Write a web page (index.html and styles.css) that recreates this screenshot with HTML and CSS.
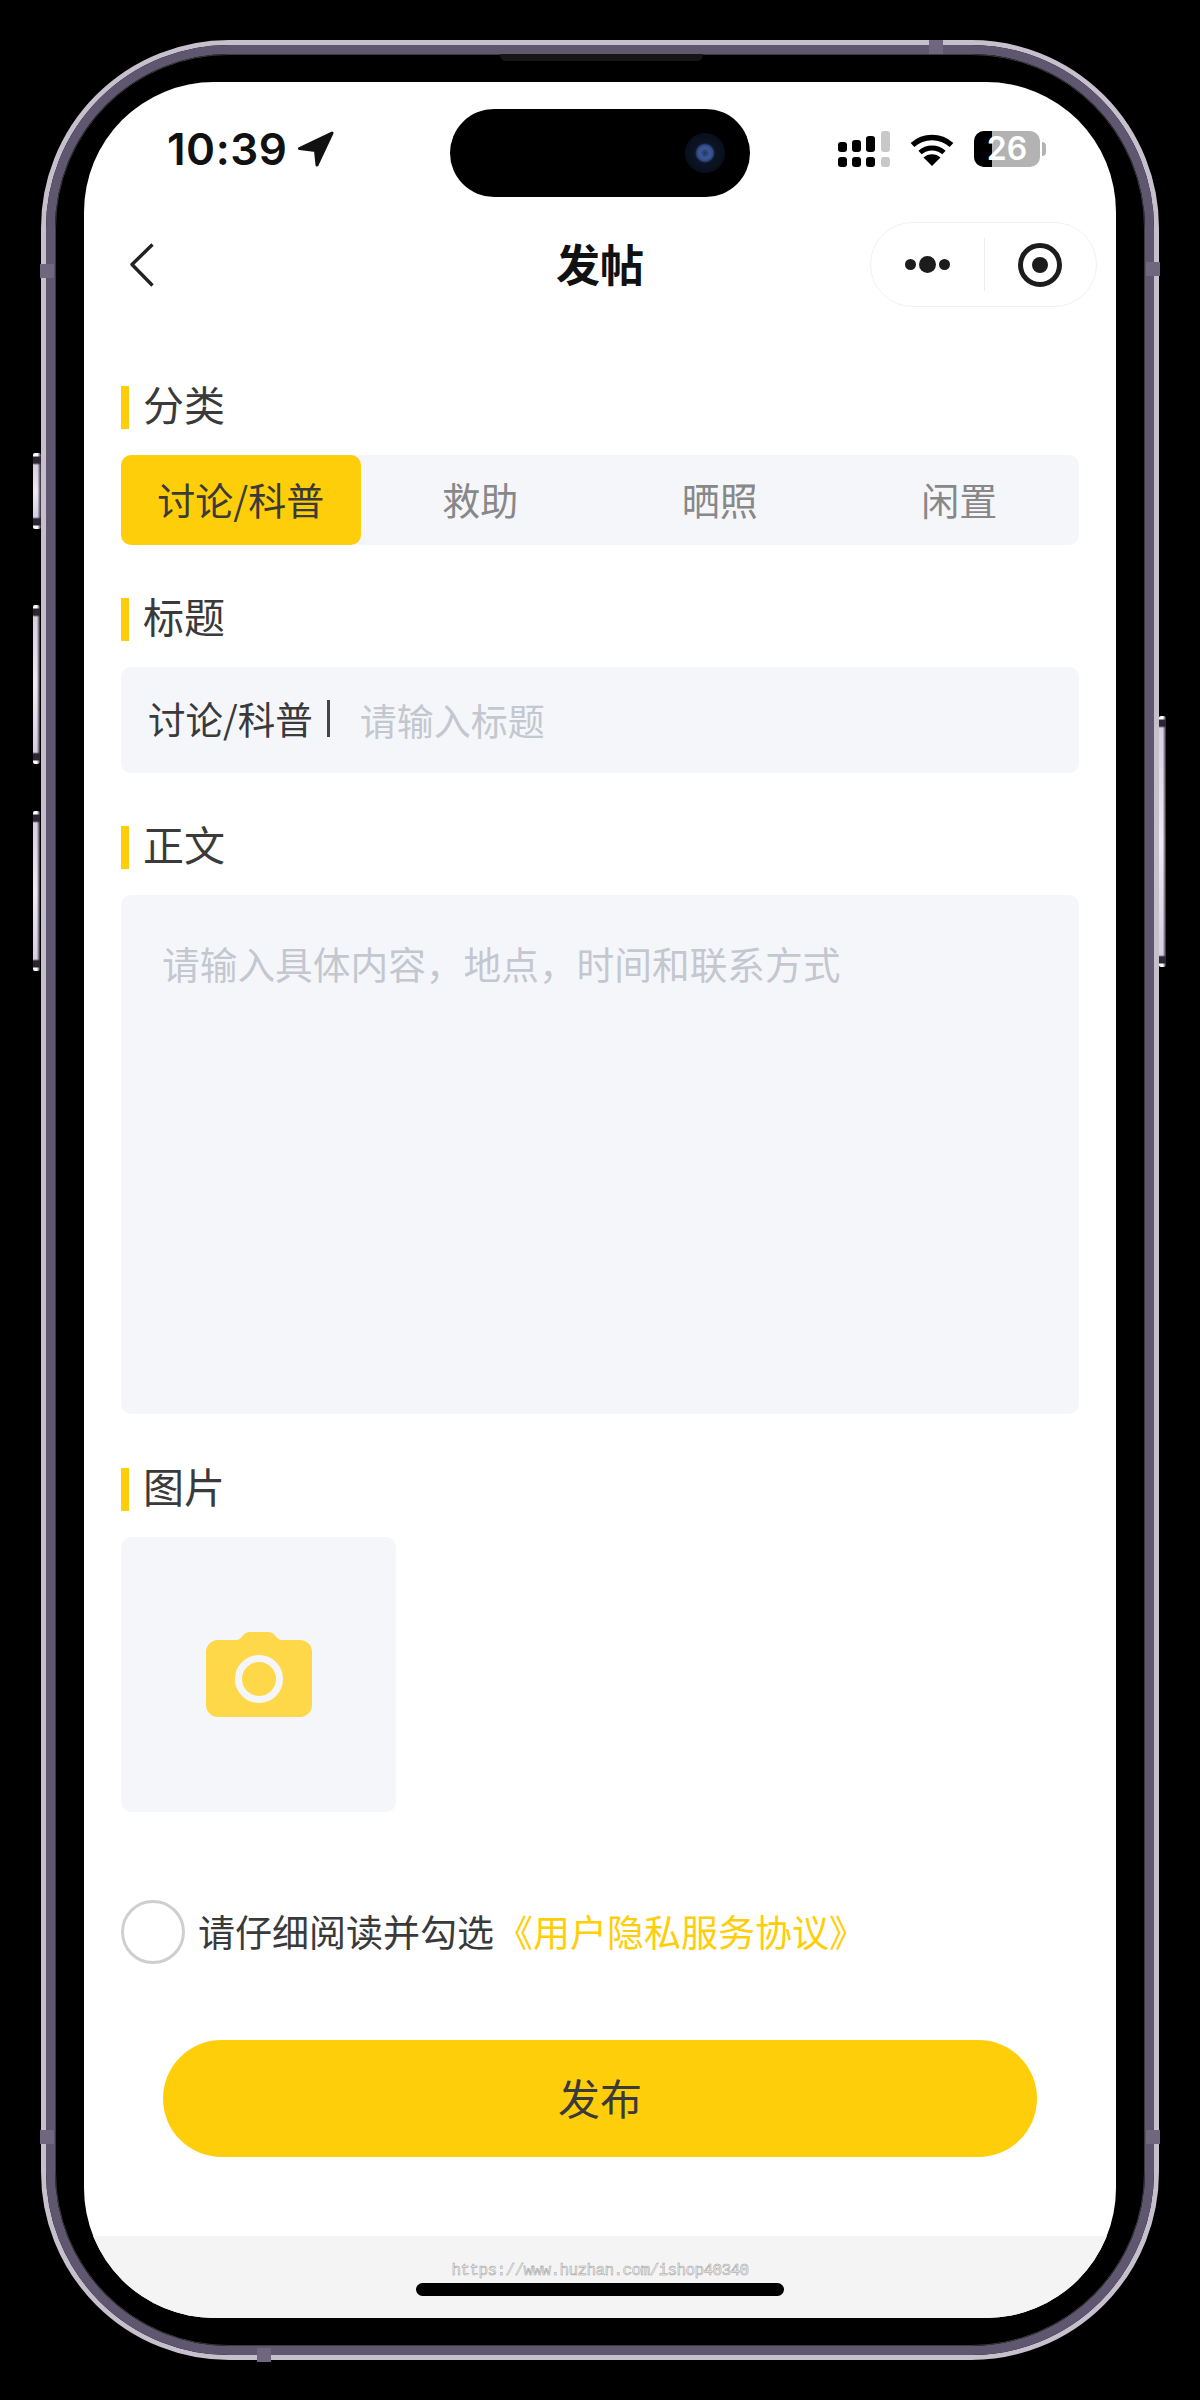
FILE: index.html
```html
<!doctype html>
<html lang="zh-CN">
<head>
    <meta charset="utf-8">
    <meta name="viewport" content="width=device-width, initial-scale=1">
    <title>发帖</title>
    <link rel="stylesheet" href="styles.css">
</head>
<body>

<div class="phone">
    <!-- Side buttons and antenna marks sit over the frame -->
    <span class="side-btn silent"></span>
    <span class="side-btn vol-up"></span>
    <span class="side-btn vol-down"></span>
    <span class="side-btn power"></span>
    <span class="mark mark-top"></span>
    <span class="mark mark-left"></span>
    <span class="mark mark-right"></span>
    <span class="mark mark-low-left"></span>
    <span class="mark mark-low-right"></span>
    <span class="mark mark-bottom"></span>

    <div class="band">
        <div class="bezel">
            <span class="speaker"></span>
            <div class="screen">
                <div class="island"><span class="lens"></span></div>

                <!-- Status bar -->
                <div class="status-bar">
                    <div class="status-left">
                        <span class="time">10:39</span>
                        <svg class="loc-arrow" viewBox="0 0 36 36" width="36" height="36">
                            <path d="M34 2 1.5 17.5 17.5 19.5 19 34Z" fill="#111" stroke="#111" stroke-width="3" stroke-linejoin="round"/>
                        </svg>
                    </div>
                    <div class="status-right">
                        <svg class="signal" viewBox="0 0 52 36" width="52" height="36">
                            <g fill="#000">
                                <rect x="0" y="11" width="9" height="10" rx="3"/>
                                <rect x="14" y="9" width="9" height="12" rx="3"/>
                                <rect x="28" y="5" width="9" height="16" rx="3"/>
                                <rect x="0" y="26" width="9" height="10" rx="3"/>
                                <rect x="14" y="26" width="9" height="10" rx="3"/>
                                <rect x="28" y="26" width="9" height="10" rx="3"/>
                            </g>
                            <g fill="#c8c8c8">
                                <rect x="43" y="0" width="9" height="21" rx="3"/>
                                <rect x="43" y="26" width="9" height="10" rx="3"/>
                            </g>
                        </svg>
                        <svg class="wifi" viewBox="0 0 44 34" width="44" height="34">
                            <path d="M2.5 13A29 29 0 0 1 41.5 13" fill="none" stroke="#000" stroke-width="5.5"/>
                            <path d="M10 20.5A18 18 0 0 1 34 20.5" fill="none" stroke="#000" stroke-width="5"/>
                            <path d="M22 34 13.5 25.5A12.5 12.5 0 0 1 30.5 25.5Z" fill="#000"/>
                        </svg>
                        <div class="battery">
                            <div class="battery-body">
                                <span class="battery-level"></span>
                                <span class="battery-text">26</span>
                            </div>
                            <span class="battery-nub"></span>
                        </div>
                    </div>
                </div>

                <!-- Navigation bar -->
                <div class="nav-bar">
                    <div class="nav-left">
                        <svg class="back" viewBox="0 0 24 44" width="24" height="44">
                            <path d="M22.5 1.5 2 21.5 22.5 42.5" fill="none" stroke="#222" stroke-width="3.4" stroke-linejoin="round"/>
                        </svg>
                    </div>
                    <h1 class="nav-title">发帖</h1>
                    <div class="nav-right">
                        <div class="capsule">
                            <div class="capsule-part">
                                <span class="dot"></span>
                                <span class="dot dot-big"></span>
                                <span class="dot"></span>
                            </div>
                            <div class="capsule-part">
                                <span class="target"></span>
                            </div>
                        </div>
                    </div>
                </div>

                <!-- Form -->
                <div class="form">
                    <section class="field field-first">
                        <h2 class="field-title">分类</h2>
                        <div class="tabs">
                            <div class="tab active">讨论/科普</div>
                            <div class="tab">救助</div>
                            <div class="tab">晒照</div>
                            <div class="tab">闲置</div>
                        </div>
                    </section>

                    <section class="field">
                        <h2 class="field-title">标题</h2>
                        <div class="title-input">
                            <span class="title-tag">讨论/科普</span>
                            <span class="title-sep"></span>
                            <span class="placeholder">请输入标题</span>
                        </div>
                    </section>

                    <section class="field">
                        <h2 class="field-title">正文</h2>
                        <div class="body-input">
                            <span class="placeholder">请输入具体内容，地点，时间和联系方式</span>
                        </div>
                    </section>

                    <section class="field field-last">
                        <h2 class="field-title">图片</h2>
                        <div class="upload">
                            <svg viewBox="0 0 106 85" width="106" height="85">
                                <path d="M12 8H30C33 8 35 6 37 3.500 38.500 1.500 41 0 44 0H62C65 0 67.500 1.500 69 3.500 71 6 73 8 76 8H94A12 12 0 0 1 106 20V73A12 12 0 0 1 94 85H12A12 12 0 0 1 0 73V20A12 12 0 0 1 12 8Z" fill="#ffd84a"/>
                                <circle cx="53" cy="47" r="20.500" fill="none" stroke="#f5f6fa" stroke-width="7"/>
                            </svg>
                        </div>
                    </section>

                    <div class="agree">
                        <span class="radio"></span>
                        <span class="agree-text">请仔细阅读并勾选</span>
                        <span class="agree-link">《用户隐私服务协议》</span>
                    </div>

                    <div class="submit">发布</div>
                </div>

                <!-- Bottom strip -->
                <div class="home-strip">
                    <span class="watermark">https://www.huzhan.com/ishop40340</span>
                    <span class="home-bar"></span>
                </div>
            </div>
        </div>
    </div>
</div>

</body>
</html>
```

FILE: styles.css
```css
:root {
    --yellow: #ffce0a;
    --field-bg: #f5f6fa;
    --text: #3a3a3a;
    --hint: #c4c7cf;
}

* {
    box-sizing: border-box;
}

body {
    margin: 0;
    width: 1200px;
    height: 2400px;
    padding: 40px 41px;
    background: #000;
    font-family: "Noto Sans CJK SC", "Noto Sans", sans-serif;
    color: var(--text);
}

/* Phone frame */
.phone {
    position: relative;
    height: 2320px;
    border: 5px solid #c5c0cc;
    border-radius: 188px;
}

.band {
    height: 100%;
    border: 9px solid #5f5670;
    border-radius: 183px;
}

.bezel {
    position: relative;
    height: 100%;
    padding: 27px 28px;
    border: 1px solid #3a3a3a;
    border-radius: 174px;
    background: #000;
}

.speaker {
    position: absolute;
    top: -1px;
    left: 444px;
    width: 203px;
    height: 7px;
    background: #161616;
    border-radius: 0 0 6px 6px;
}

.side-btn {
    position: absolute;
    width: 7px;
    background:
        linear-gradient(to right, transparent 55%, #2a2433 100%),
        linear-gradient(to bottom, #fff 0, #fff 3px, #2a2433 4px, #2a2433 10px, #d5cfe0 12px, #efeaf5 50%, #d5cfe0 calc(100% - 12px), #2a2433 calc(100% - 10px), #2a2433 calc(100% - 4px), #fff calc(100% - 3px));
    border-radius: 2px;
}

.silent { left: -13px; top: 408px; width: 8px; height: 76px; }
.vol-up { left: -13px; top: 560px; height: 159px; }
.vol-down { left: -13px; top: 766px; height: 160px; }
.power { right: -12px; top: 671px; height: 251px; }

.mark {
    position: absolute;
    z-index: 1;
    background: #70677f;
}

.mark-top { top: -5px; left: 883px; width: 14px; height: 14px; }
.mark-left { left: -6px; top: 219px; width: 14px; height: 14px; }
.mark-right { right: -6px; top: 217px; width: 14px; height: 14px; }
.mark-low-left { left: -6px; top: 2085px; width: 14px; height: 14px; }
.mark-low-right { right: -6px; top: 2085px; width: 14px; height: 14px; }
.mark-bottom { bottom: -7px; left: 211px; width: 14px; height: 14px; }

/* Screen */
.screen {
    position: relative;
    display: flex;
    flex-direction: column;
    height: 100%;
    overflow: hidden;
    background: #fff;
    border-radius: 130px;
}

.island {
    position: absolute;
    top: 27px;
    left: 366px;
    width: 300px;
    height: 88px;
    background: #000;
    border-radius: 44px;
}

.lens {
    position: absolute;
    top: 24px;
    right: 25px;
    width: 40px;
    height: 40px;
    background: radial-gradient(circle, #26335a 0, #3a5a9a 5px, #2f4a80 8px, #0d1526 10px, #080e1a 20px);
    border-radius: 50%;
}

/* Status bar */
.status-bar {
    display: flex;
    align-items: center;
    justify-content: space-between;
    flex-shrink: 0;
    height: 140px;
    padding: 0 70px 6px 83px;
}

.status-left {
    display: flex;
    align-items: center;
    gap: 11px;
}

.time {
    font-family: Inter, "Liberation Sans", sans-serif;
    font-size: 44px;
    font-weight: 600;
    line-height: 1;
    letter-spacing: 0.5px;
    color: #111;
}

.status-right {
    display: flex;
    align-items: center;
    gap: 20px;
}

.signal, .wifi, .loc-arrow, .back {
    display: block;
}

.battery {
    display: flex;
    align-items: center;
    gap: 2px;
}

.battery-body {
    position: relative;
    display: flex;
    align-items: center;
    justify-content: center;
    width: 66px;
    height: 36px;
    background: #b3b3b3;
    border-radius: 10px;
}

.battery-level {
    position: absolute;
    top: 0;
    bottom: 0;
    left: 0;
    width: 18px;
    background: #000;
    border-radius: 10px 0 0 10px;
}

.battery-text {
    position: relative;
    font-family: Inter, "Liberation Sans", sans-serif;
    font-size: 32px;
    font-weight: 600;
    line-height: 1;
    color: #fff;
}

.battery-nub {
    width: 4px;
    height: 14px;
    background: #b3b3b3;
    border-radius: 0 4px 4px 0;
}

/* Navigation bar */
.nav-bar {
    display: grid;
    grid-template-columns: 1fr auto 1fr;
    align-items: center;
    flex-shrink: 0;
    height: 85px;
    padding: 0 19px;
}

.nav-left {
    padding-left: 27px;
}

.nav-title {
    margin: 0 0 3px;
    font-size: 44px;
    font-weight: 700;
    line-height: 1;
    color: #111;
}

.nav-right {
    display: flex;
    justify-content: flex-end;
}

.capsule {
    display: flex;
    width: 227px;
    height: 85px;
    border: 1.5px solid #f1f1f1;
    border-radius: 43px;
}

.capsule-part {
    display: flex;
    align-items: center;
    justify-content: center;
    flex: 1;
    gap: 3px;
}

.capsule-part + .capsule-part {
    position: relative;
}

.capsule-part + .capsule-part::before {
    content: '';
    position: absolute;
    top: 15px;
    bottom: 15px;
    left: 0;
    width: 1px;
    background: #eee;
}

.dot {
    width: 11px;
    height: 11px;
    background: #1c1c1c;
    border-radius: 50%;
}

.dot-big {
    width: 17px;
    height: 17px;
}

.target {
    display: flex;
    align-items: center;
    justify-content: center;
    width: 44px;
    height: 44px;
    border: 5px solid #1c1c1c;
    border-radius: 50%;
}

.target::after {
    content: '';
    width: 16px;
    height: 16px;
    background: #1c1c1c;
    border-radius: 50%;
}

/* Form */
.form {
    display: flex;
    flex-direction: column;
    flex: 1;
    padding: 0 37px;
}

.field {
    margin-top: 53px;
}

.field-first {
    margin-top: 79px;
}

.field-last {
    margin-top: 54px;
}

.field-title {
    display: flex;
    align-items: flex-start;
    gap: 14px;
    height: 43px;
    margin: 0 0 26px;
    font-size: 41px;
    font-weight: 400;
    line-height: 34px;
    color: var(--text);
}

.field-title::before {
    content: '';
    width: 8px;
    height: 43px;
    background: var(--yellow);
}

.tabs {
    display: grid;
    grid-template-columns: repeat(4, 1fr);
    height: 90px;
    background: var(--field-bg);
    border-radius: 10px;
}

.tab {
    display: flex;
    align-items: center;
    justify-content: center;
    padding-bottom: 4px;
    font-size: 38px;
    color: #888;
}

.tab.active {
    color: var(--text);
    background: var(--yellow);
    border-radius: 10px;
}

.title-input {
    display: flex;
    align-items: center;
    height: 106px;
    padding-left: 27px;
    background: var(--field-bg);
    border-radius: 10px;
    font-size: 37.5px;
}

.title-tag {
    margin-bottom: 6px;
}

.title-sep {
    width: 3px;
    height: 37px;
    margin: 0 30px 3px 14px;
    background: #444;
}

.title-input .placeholder {
    margin-top: 0;
    font-size: 37px;
}

.placeholder {
    color: var(--hint);
}

.body-input {
    height: 519px;
    padding: 40px 41px;
    background: var(--field-bg);
    border-radius: 10px;
    font-size: 37.7px;
    line-height: 56px;
}

.upload {
    display: flex;
    align-items: center;
    justify-content: center;
    width: 275px;
    height: 275px;
    background: var(--field-bg);
    border-radius: 10px;
}

.agree {
    display: flex;
    align-items: center;
    height: 64px;
    margin-top: 88px;
    font-size: 37px;
}

.radio {
    width: 64px;
    height: 64px;
    margin-right: 13px;
    border: 3px solid #cfcfcf;
    border-radius: 50%;
}

.agree-text {
    margin-bottom: 3px;
}

.agree-link {
    margin-bottom: 3px;
    margin-left: 2px;
    color: var(--yellow);
}

.submit {
    display: flex;
    align-items: center;
    justify-content: center;
    height: 117px;
    margin: 76px 42px 0;
    padding-bottom: 4px;
    background: var(--yellow);
    border-radius: 59px;
    font-size: 42px;
    color: var(--text);
}

/* Bottom strip */
.home-strip {
    display: flex;
    flex-direction: column;
    align-items: center;
    flex-shrink: 0;
    height: 82px;
    padding-top: 25px;
    background: #f4f4f4;
}

.watermark {
    height: 22px;
    font-family: "Liberation Mono", monospace;
    font-size: 16px;
    line-height: 20px;
    letter-spacing: -0.6px;
    color: #f4f4f4;
    -webkit-text-stroke: 0.5px #999;
}

.home-bar {
    width: 368px;
    height: 13px;
    background: #000;
    border-radius: 7px;
}
```
